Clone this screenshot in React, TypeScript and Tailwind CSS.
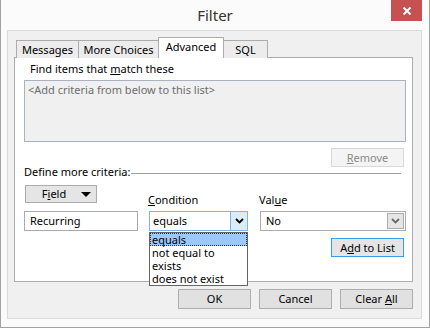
const Chevron = ({ color }: { color: string }) => (
  <svg width="9" height="6" viewBox="0 0 9 6">
    <path d="M1 1 L4.5 4.5 L8 1" fill="none" stroke={color} strokeWidth="1.8" />
  </svg>
);

const Tab = ({ label, width, active }: { label: string; width: string; active?: boolean }) =>
  active ? (
    <div className={`${width} h-[21px] -ml-px bg-white border border-b-0 border-[#acacac] flex items-start justify-center pt-[1px] z-10`}>
      {label}
    </div>
  ) : (
    <div className={`${width} h-[18px] -ml-px first:ml-0 bg-[#ececec] border border-b-0 border-[#acacac] flex items-center justify-center`}>
      {label}
    </div>
  );

const Button = ({ children }: { children: React.ReactNode }) => (
  <button className="w-[73px] h-[20px] flex items-center justify-center border border-[#adadad] bg-[#e1e1e1]">
    <span>{children}</span>
  </button>
);

export default function App() {
  return (
    <div className="w-[430px] h-[328px] bg-[#fbfbfb] border-x border-b border-[#a2a2a2] text-[11px] leading-[16px] text-black font-['Noto_Sans',sans-serif] overflow-hidden">
      {/* Title bar */}
      <div className="h-[30px] flex items-start">
        <div className="w-[38px]" />
        <div className="flex-1 text-center text-[15px] leading-[30px] text-[#333]">Filter</div>
        <div className="w-[31px] h-[21px] mr-[7px] bg-[#c75050] flex items-center justify-center">
          <svg width="10" height="8" viewBox="0 0 10 8">
            <path d="M1.5 0.5 L8.5 7.5 M8.5 0.5 L1.5 7.5" stroke="white" strokeWidth="2" />
          </svg>
        </div>
      </div>

      {/* Dialog panel */}
      <div className="ml-[6px] w-[415px] h-[289px] bg-[#f0f0f0] border border-[#dadada] pl-[6px]">
        {/* Tabs */}
        <div className="flex items-end pt-[6px] pl-[2px] -mb-px relative">
          <Tab label="Messages" width="w-[63px]" />
          <Tab label="More Choices" width="w-[81px]" />
          <Tab label="Advanced" width="w-[66px]" active />
          <Tab label="SQL" width="w-[45px]" />
        </div>

        {/* Tab content */}
        <div className="w-[399px] h-[225px] bg-white border border-[#acacac] flex flex-col">
          <div className="pl-[15px] pt-[3px]">
            Find items that <span className="underline">m</span>atch these
          </div>
          <div className="ml-[9px] mt-[3px] w-[382px] h-[62px] bg-[#f0f0f0] border border-[#a9b3c0] px-[3px] py-[1px] text-[#6d6d6d]">
            &lt;Add criteria from below to this list&gt;
          </div>
          <div className="flex justify-end pr-[8px] mt-[6px]">
            <div className="w-[73px] h-[19px] flex items-center justify-center border border-[#d9d9d9] bg-[#f4f4f4] text-[#8a8a8a]">
              <span>
                <span className="underline">R</span>emove
              </span>
            </div>
          </div>

          <div className="flex items-center ml-[9px] mr-[11px] mt-[-3px]">
            <span>Define more criteria:</span>
            <div className="flex-1 h-px bg-[#a0a0a0] ml-[1px] mt-[2px]" />
          </div>

          {/* Labels row */}
          <div className="flex ml-[10px] mt-[5px] h-[23px]">
            <div className="w-[72px] h-[18px] border border-[#acacac] bg-[#e5e5e5] flex items-center justify-center relative">
              <span className="ml-[-14px]">
                F<span className="underline">i</span>eld
              </span>
              <svg className="absolute right-[5px] top-[6px]" width="10" height="5" viewBox="0 0 10 5">
                <path d="M0 0 L10 0 L5 5 Z" fill="black" />
              </svg>
            </div>
            <div className="ml-[51px] w-[99px] self-end">
              <span className="underline">C</span>ondition
            </div>
            <div className="ml-[12px] self-end">
              Val<span className="underline">u</span>e
            </div>
          </div>

          {/* Inputs row */}
          <div className="flex ml-[9px] mt-[3px]">
            <div className="w-[114px] h-[20px] border border-[#ababab] px-[5px] flex items-center">Recurring</div>
            <div className="ml-[11px] w-[99px] h-[20px] border border-[#7eb4ea] flex relative">
              <div className="flex-1 flex items-center px-[3px]">equals</div>
              <div className="w-[17px] bg-[#dcecfc] border-l border-[#7eb4ea] flex items-center justify-center">
                <Chevron color="#000" />
              </div>
              {/* Open list */}
              <div className="absolute left-[-1px] top-[20px] w-[99px] h-[54px] bg-white border border-[#646464] z-20 flex flex-col leading-[13px]">
                <div className="h-[13px] bg-[#99c9ff] border border-dotted border-[#333] flex items-center px-[1px]">equals</div>
                <div className="h-[13px] flex items-center px-[2px]">not equal to</div>
                <div className="h-[13px] flex items-center px-[2px]">exists</div>
                <div className="h-[13px] flex items-center px-[2px]">does not exist</div>
              </div>
            </div>
            <div className="ml-[12px] w-[146px] h-[20px] border border-[#acacac] flex p-[1px]">
              <div className="flex-1 flex items-center px-[4px]">No</div>
              <div className="w-[17px] bg-[#e5e5e5] border border-[#acacac] flex items-center justify-center">
                <Chevron color="#6a6a6a" />
              </div>
            </div>
          </div>

          <div className="flex justify-end pr-[8px] mt-[7px]">
            <div className="w-[73px] h-[19px] flex items-center justify-center border border-[#3c9be8] bg-[#e5e5e5]">
              <span>
                A<span className="underline">d</span>d to List
              </span>
            </div>
          </div>
        </div>

        {/* Bottom buttons */}
        <div className="flex justify-end gap-[8px] pr-[8px] mt-[7px]">
          <Button>OK</Button>
          <Button>Cancel</Button>
          <Button>
            Clear <span className="underline">A</span>ll
          </Button>
        </div>
      </div>
    </div>
  );
}
